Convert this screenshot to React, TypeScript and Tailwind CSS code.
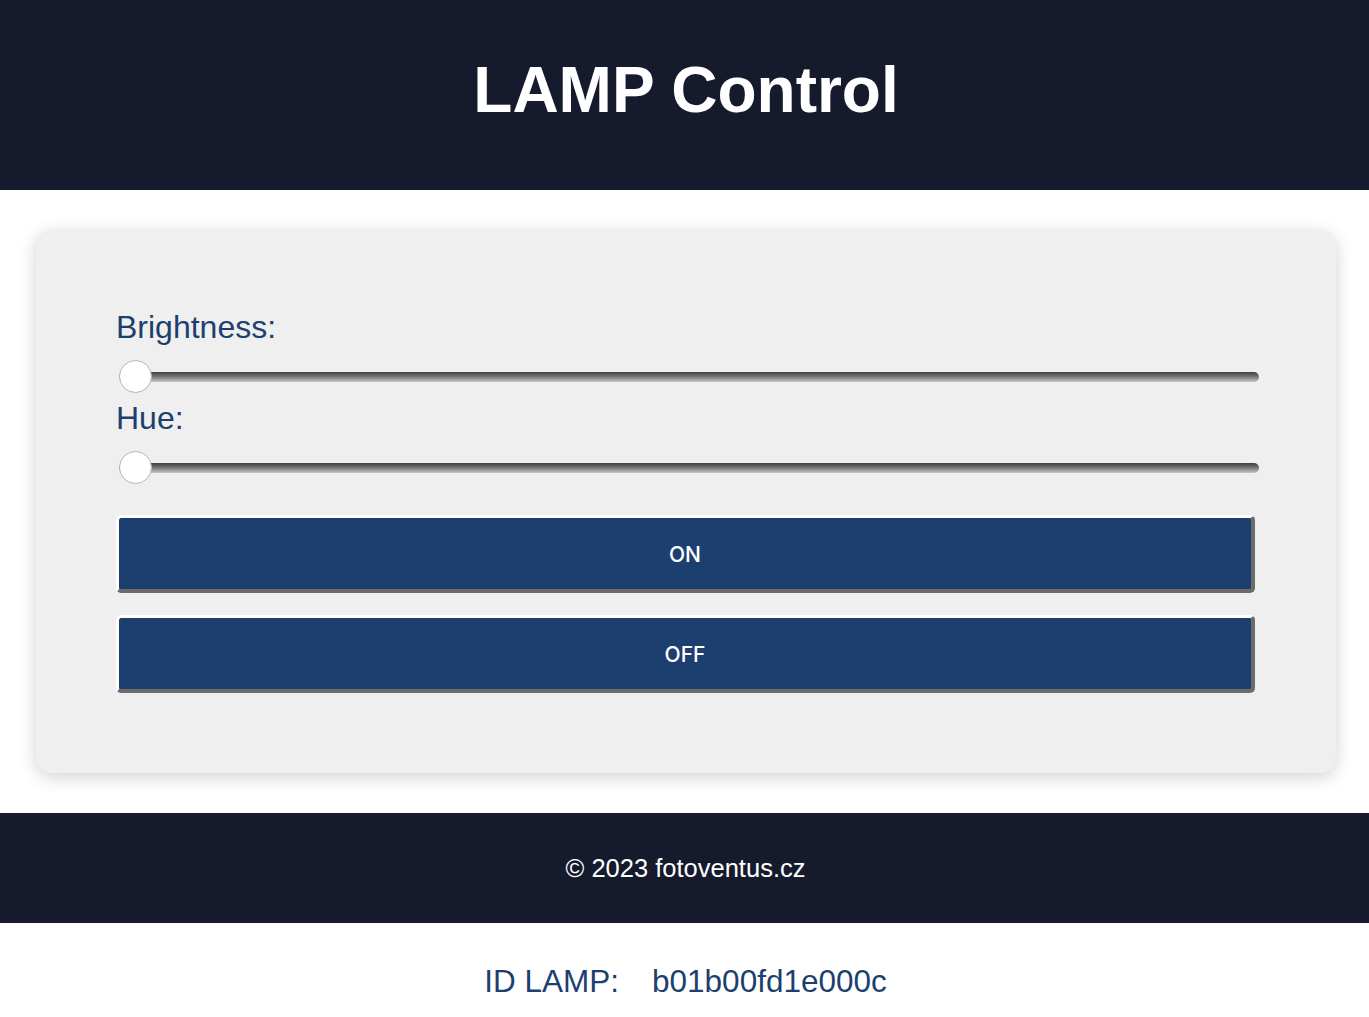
import React, { useState } from "react";

interface SliderProps {
  label: string;
  value: number;
}

// Range slider look-alike (track + round thumb)
function Slider({ label, value }: SliderProps) {
  return (
    <div className="flex flex-col">
      <label className="text-[32px] leading-[37px] text-[#1d3f6f]">
        {label}
      </label>

      <div className="relative mt-[14px] ml-[3px] w-[1140px] h-[33px] flex items-center">
        <div className="w-full h-[10px] rounded-full bg-linear-to-b from-[#3f3f3f] via-[#7a7a7a] to-[#c8c8c8]" />

        <div
          className="absolute top-0 w-[33px] h-[33px] rounded-full bg-white border border-[#b5b5b5]"
          style={{ left: `${value}%` }}
        />
      </div>
    </div>
  );
}

function App() {
  const [brightness] = useState(0);
  const [hue] = useState(0);

  return (
    <div className="min-h-screen bg-white font-['Liberation_Sans',Arial,sans-serif]">

      {/* HEADER */}
      <header className="bg-[#151a2d] pt-[53px] pb-[63px] text-center">
        <h1 className="text-[64px] leading-[74px] font-bold text-white pl-[3px]">
          LAMP Control
        </h1>
      </header>

      {/* CONTROL CARD */}
      <main className="py-[40px]">
        <div className="w-[1300px] ml-[36px] bg-[#efefef] rounded-[16px] shadow-[0_4px_18px_rgba(0,0,0,0.18)] pt-[79px] pb-[80px] pl-[80px] pr-[77px]">

          <Slider label="Brightness:" value={brightness} />

          <div className="mt-[7px]">
            <Slider label="Hue:" value={hue} />
          </div>

          <div className="mt-[31px] flex flex-col gap-[22px] w-[1139px]">
            <button className="h-[78px] pt-[3px] rounded-[5px] bg-[#1d3f6f] border-t-[3px] border-l-[3px] border-b-4 border-r-4 border-t-white border-l-white border-b-[#6b6b6b] border-r-[#6b6b6b] text-white text-[21px] font-['Inter',sans-serif] font-medium">
              ON
            </button>

            <button className="h-[78px] pt-[3px] rounded-[5px] bg-[#1d3f6f] border-t-[3px] border-l-[3px] border-b-4 border-r-4 border-t-white border-l-white border-b-[#6b6b6b] border-r-[#6b6b6b] text-white text-[21px] font-['Inter',sans-serif] font-medium">
              OFF
            </button>
          </div>

        </div>
      </main>

      {/* FOOTER */}
      <footer className="bg-[#151a2d] h-[110px] flex items-center justify-center">
        <p className="text-white text-[25.5px] pl-[2px]">
          © 2023 fotoventus.cz
        </p>
      </footer>

      {/* LAMP ID */}
      <div className="pt-[40px] pb-[20px] flex justify-center text-[31.5px] leading-[37px] text-[#1d3f6f] pl-[2px]">
        <span>ID LAMP:</span>
        <span className="ml-[33px]">b01b00fd1e000c</span>
      </div>

    </div>
  );
}

export default App;
